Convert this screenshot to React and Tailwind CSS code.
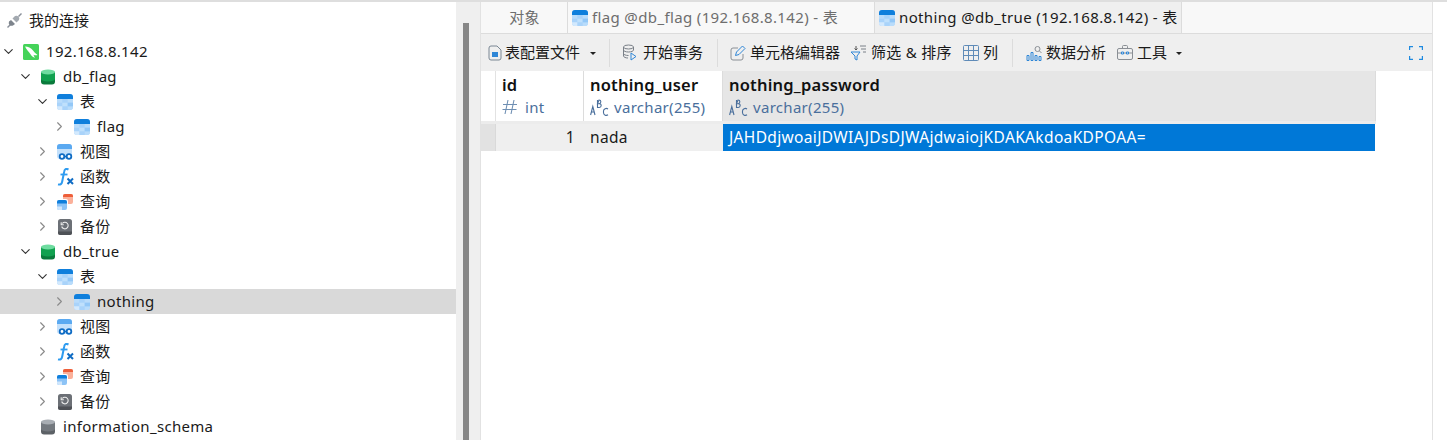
import React from "react";
import { ChevronDown, ChevronRight } from "lucide-react";

const cjk = "font-['Noto_Sans','Noto_Sans_CJK_SC',sans-serif]";

function TableIcon() {
  return (
    <svg width="16" height="16" viewBox="0 0 16 16" className="shrink-0">
      <rect x="0" y="0" width="16" height="16" rx="3" fill="#a9d3fa" />
      <path d="M0 5V3a3 3 0 0 1 3-3h10a3 3 0 0 1 3 3v2z" fill="#0f7fdc" />
      <path d="M0 5h5.300v3.700H0zM10.700 5H16v3.700h-5.300z" fill="#b9dcfb" />
      <path d="M5.300 8.700h5.400v3.600H5.300z" fill="#bfe0fc" />
      <path d="M0 12.300h5.300V16H3a3 3 0 0 1-3-3z" fill="#d3e9fd" />
      <path d="M10.700 12.300H16V13a3 3 0 0 1-3 3h-2.300z" fill="#b9dcfb" />
      <path d="M10.700 8.700H16v3.600h-5.300z" fill="#94c8f7" />
    </svg>
  );
}

function DbIcon({ top, mid, low }) {
  return (
    <svg width="14" height="16" viewBox="0 0 14 16" className="shrink-0 ml-[1px]">
      <rect x="0" y="2" width="14" height="13.500" rx="3" fill={low} />
      <path d="M0 3h14v7a7 2.400 0 0 1-14 0z" fill={mid} />
      <ellipse cx="7" cy="3" rx="7" ry="2.600" fill={top} />
    </svg>
  );
}

function ViewIcon() {
  return (
    <svg width="16" height="16" viewBox="0 0 16 16" className="shrink-0">
      <rect width="15" height="15" rx="3" fill="#c3e0fb" />
      <path d="M0 5V3a3 3 0 0 1 3-3h9a3 3 0 0 1 3 3v2z" fill="#5aa9f1" />
      <circle cx="5" cy="12.500" r="2.300" fill="#fff" stroke="#0f6cc4" strokeWidth="1.800" />
      <circle cx="12" cy="12.500" r="2.300" fill="#fff" stroke="#0f6cc4" strokeWidth="1.800" />
      <path d="M7 12.500h3" stroke="#0f6cc4" strokeWidth="1.600" />
    </svg>
  );
}

function FuncIcon() {
  return (
    <svg width="17" height="18" viewBox="0 0 17 18" className="shrink-0">
      <path d="M11.500 1.500C9 .2 7.600 1.200 7.200 3.500L5.200 13.500c-.4 2.500-1.800 3.500-4.200 2.900" fill="none" stroke="#2d9bf0" strokeWidth="2" />
      <path d="M3.500 6.500h7" stroke="#2d9bf0" strokeWidth="1.800" />
      <path d="M10.500 10.500l5.500 5.500M16 10.500l-5.500 5.500" stroke="#0f6cc4" strokeWidth="2" />
    </svg>
  );
}

function QueryIcon() {
  return (
    <svg width="17" height="16" viewBox="0 0 17 16" className="shrink-0">
      <rect x="6" y="0" width="10" height="10" rx="2" fill="#fbb09a" />
      <path d="M6 3V2a2 2 0 0 1 2-2h6a2 2 0 0 1 2 2v1z" fill="#ee5f3a" />
      <rect x="-1" y="5" width="12" height="12" rx="2" fill="#fff" />
      <rect x="0" y="6" width="10" height="10" rx="2" fill="#8cc3f6" />
      <path d="M0 9.500V8a2 2 0 0 1 2-2h6a2 2 0 0 1 2 2v1.500z" fill="#0f7fdc" />
      <path d="M0 12.500h5V16H2a2 2 0 0 1-2-2z" fill="#cfe6fc" />
    </svg>
  );
}

function BackupIcon() {
  return (
    <svg width="14" height="16" viewBox="0 0 14 16" className="shrink-0 ml-[1px]">
      <rect width="14" height="16" rx="2.500" fill="#6c7076" />
      <path d="M0 12.500h14v1a2.500 2.500 0 0 1-2.500 2.500h-9A2.500 2.500 0 0 1 0 13.500z" fill="#4e5156" />
      <path d="M4.300 4.500a3.300 3.300 0 1 1-.6 3" fill="none" stroke="#eeeeee" strokeWidth="1.100" />
      <path d="M3.200 3.200v2.600h2.600" fill="none" stroke="#eeeeee" strokeWidth="1.100" />
    </svg>
  );
}

function ConnIcon() {
  return (
    <svg width="16" height="16" viewBox="0 0 16 16" className="shrink-0">
      <rect width="16" height="16" rx="1.500" fill="#45d359" />
      <path d="M2 2.500c3 0 6 1.500 8 4 1 1.300 2.500 3 4.500 4.500-1.500.5-3 .2-4-.3.200 1 .7 2 1.500 3-2-.5-3.500-1.700-4.500-3.500C6 8 3.500 5.500 2 2.500z" fill="#fff" />
    </svg>
  );
}

function Row({ indent, open, leaf, dim, icon, label, selected }) {
  return (
    <div className={`h-[25px] flex items-center shrink-0 ${selected ? "bg-[#d9d9d9]" : ""}`}>
      <div className={indent}>
        {leaf ? (
          <div className="w-[15px]" />
        ) : open ? (
          <ChevronDown size={15} strokeWidth={1.800} className="text-[#333]" />
        ) : (
          <ChevronRight size={15} strokeWidth={1.800} className={dim ? "text-[#8a8a8a]" : "text-[#333]"} />
        )}
      </div>
      <div className="ml-[7px] w-[24px] flex items-center">{icon}</div>
      <span className="text-[#1a1a1a] ml-[-1px]">{label}</span>
    </div>
  );
}

function DbGroup({ name, table, selected }) {
  return (
    <>
      <Row indent="pl-[18px]" open icon={<DbIcon top="#6fdca0" mid="#12a150" low="#0b7a3c" />} label={name} />
      <Row indent="pl-[35px]" open icon={<TableIcon />} label="表" />
      <Row indent="pl-[52px]" dim icon={<TableIcon />} label={table} selected={selected} />
      <Row indent="pl-[35px]" dim icon={<ViewIcon />} label="视图" />
      <Row indent="pl-[35px]" dim icon={<FuncIcon />} label="函数" />
      <Row indent="pl-[35px]" dim icon={<QueryIcon />} label="查询" />
      <Row indent="pl-[35px]" dim icon={<BackupIcon />} label="备份" />
    </>
  );
}

function Tab({ label, width, active, icon }) {
  return (
    <div
      className={`h-full flex items-center shrink-0 border-r border-[#dcdcdc] tracking-[0.360px] ${width} ${
        active ? "bg-[#efefef] text-[#1a1a1a]" : "bg-[#f8f8f8] text-[#6e6e6e]"
      }`}
    >
      {icon}
      {label}
    </div>
  );
}

function ToolDivider() {
  return <div className="w-px h-[28px] bg-[#dcdcdc] shrink-0" />;
}

function Caret() {
  return <div className="w-0 h-0 border-x-[3px] border-x-transparent border-t-[3px] border-t-[#222] mt-[1px]" />;
}

function AbcIcon() {
  return (
    <svg width="19" height="17" viewBox="0 0 19 17" className="shrink-0" fill="none" stroke="#4a6f9c" strokeWidth="1.100">
      <path d="M.6 16l2.200-8.500L5 16M1.300 13h3" />
      <path d="M7.500 1v7.500h1.800a1.900 1.900 0 0 0 0-3.800H7.500m0 0h1.500a1.800 1.800 0 0 0 0-3.700z" />
      <path d="M18 10a2.800 2.800 0 0 0-4.500 2v1.800a2.800 2.800 0 0 0 4.500 2" />
    </svg>
  );
}

function HashIcon() {
  return (
    <svg width="16" height="16" viewBox="0 0 16 16" className="shrink-0" fill="none" stroke="#6f8fb3" strokeWidth="1.100">
      <path d="M6 1L3 15M12 1L9 15M1 5.500h14M.5 10.500h14" />
    </svg>
  );
}

function ColumnHead({ name, type, icon, width, gap, bg }) {
  return (
    <div className={`${width} ${bg} border-r border-[#dcdcdc] pl-[6px] pt-[4px]`}>
      <div className="font-semibold text-[#111] text-[16.500px] tracking-[0.200px] leading-[20px]">{name}</div>
      <div className={`flex items-center ${gap} mt-[4px] text-[#4a6f9c] text-[15px] tracking-[0.300px]`}>
        {icon}
        {type}
      </div>
    </div>
  );
}

export default function App() {
  return (
    <div className={`w-[1447px] h-[440px] overflow-hidden bg-white flex flex-col text-[15px] tracking-[0.300px] leading-none ${cjk}`}>
      <div className="h-[2px] bg-[#dedede] shrink-0" />
      <div className="flex-1 flex min-h-0">
        {/* connection tree */}
        <aside className="w-[456px] shrink-0 flex flex-col">
          <div className="h-[37px] shrink-0 flex items-center pl-[6px]">
            <svg width="17" height="17" viewBox="0 0 17 17">
              <path d="M1.500 15.500l3-3" stroke="#8a9099" strokeWidth="1.500" />
              <path d="M5 8l4 4-2 1.500a3 3 0 0 1-4-4z" fill="#7d848c" />
              <path d="M6.500 6.500l4 4 2.500-2.500a3 3 0 0 0-4-4z" fill="#a3a9b0" />
              <path d="M12.500 4.500l3-3" stroke="#8a9099" strokeWidth="1.500" />
            </svg>
            <span className="ml-[6px] text-[#1a1a1a] tracking-normal">我的连接</span>
          </div>
          <div className="flex flex-col">
            <Row indent="pl-[1px]" open icon={<ConnIcon />} label="192.168.8.142" />
            <DbGroup name="db_flag" table="flag" />
            <DbGroup name="db_true" table="nothing" selected />
            <Row indent="pl-[18px]" leaf icon={<DbIcon top="#a8adb3" mid="#74797f" low="#5c6166" />} label="information_schema" />
          </div>
        </aside>

        {/* splitter */}
        <div className="w-[25px] shrink-0 bg-[#efefef] border-r border-[#e2e2e2] pl-[7px] pt-[21px]">
          <div className="w-[6px] h-full bg-[#878787]" />
        </div>

        {/* table pane */}
        <main className="w-[952px] shrink-0 flex flex-col border-r border-[#e2e2e2]">
          <div className="h-[32px] shrink-0 flex bg-[#f8f8f8] border-b border-[#dcdcdc]">
            <Tab label="对象" width="w-[87px] justify-center pl-[1px]" />
            <Tab
              width="w-[307px] pl-[4px]"
              icon={<span className="mr-[4px]"><TableIcon /></span>}
              label="flag @db_flag (192.168.8.142) - 表"
            />
            <Tab
              active
              width="w-[307px] pl-[4px]"
              icon={<span className="mr-[4px]"><TableIcon /></span>}
              label="nothing @db_true (192.168.8.142) - 表"
            />
          </div>
          <div className="h-[37px] shrink-0 bg-[#efefef] flex items-center text-[#1a1a1a] tracking-normal">
            <div className="flex items-center gap-[3px] ml-[7px] w-[121px]">
              <svg width="14" height="16" viewBox="0 0 14 16" fill="none">
                <path d="M1 3a2 2 0 0 1 2-2h6l4 4v8a2 2 0 0 1-2 2H3a2 2 0 0 1-2-2z" stroke="#7a8794" />
                <path d="M4 7h6v5H4z" fill="#2f86d6" />
              </svg>
              <span>表配置文件</span>
              <span className="ml-[7px]"><Caret /></span>
            </div>
            <ToolDivider />
            <div className="flex items-center gap-[5px] ml-[12px] w-[95px]">
              <svg width="16" height="17" viewBox="0 0 16 17" fill="none" stroke="#7a8088">
                <ellipse cx="6.500" cy="3" rx="5" ry="2" />
                <path d="M1.500 3v9c0 1 2 2 4.500 2M11.500 3v3M1.500 6c0 1 2 2 5 2s5-1 5-2M1.500 9.500c0 1 2 2 5 2" />
                <path d="M9 9l5 3.500L9 16z" stroke="#2f86d6" />
              </svg>
              <span>开始事务</span>
            </div>
            <ToolDivider />
            <div className="flex items-center gap-[4px] ml-[12px] w-[120px]">
              <svg width="16" height="16" viewBox="0 0 16 16" fill="none">
                <path d="M8 3H3a2 2 0 0 0-2 2v8a2 2 0 0 0 2 2h8a2 2 0 0 0 2-2V9" stroke="#8a8f95" />
                <path d="M5.500 10.500l1-3.500 6-6 2.500 2.500-6 6z" stroke="#2f86d6" />
              </svg>
              <span>单元格编辑器</span>
            </div>
            <div className="flex items-center gap-[4px] w-[113px] tracking-[0.300px]">
              <svg width="17" height="16" viewBox="0 0 17 16" fill="none">
                <path d="M1 7h9L7 11v4l-2-1v-3z" stroke="#2f86d6" />
                <path d="M6 1v4M4.500 3.500L6 5l1.500-1.500" stroke="#555" />
                <path d="M10 1h6M11 4h5M13 7h3" stroke="#7a8088" />
              </svg>
              <span>筛选 &amp; 排序</span>
            </div>
            <div className="flex items-center gap-[4px] w-[49px]">
              <svg width="16" height="16" viewBox="0 0 16 16" fill="none" stroke="#5f8bb8">
                <rect x="0.500" y="0.500" width="15" height="15" rx="1" />
                <path d="M5.500 .5v15M10.500 .5v15M.5 5.500h15M.5 10.500h15" />
              </svg>
              <span>列</span>
            </div>
            <ToolDivider />
            <div className="flex items-center gap-[4px] ml-[13px] w-[91px]">
              <svg width="16" height="16" viewBox="0 0 16 16" fill="none" stroke="#2f86d6">
                <path d="M1 10.500h2v5H1zM5 7.500h2v8H5zM9 10.500h2v5H9zM13 11.500h2v4h-2z" />
                <circle cx="11.500" cy="4" r="2.500" stroke="#8a8f95" />
                <path d="M13.500 6l2 2" stroke="#8a8f95" />
              </svg>
              <span>数据分析</span>
            </div>
            <div className="flex items-center gap-[4px]">
              <svg width="16" height="15" viewBox="0 0 16 15" fill="none" stroke="#8a8f95">
                <rect x="0.500" y="3.500" width="15" height="11" rx="1.500" />
                <path d="M5.500 3.500v-2a1 1 0 0 1 1-1h3a1 1 0 0 1 1 1v2M.5 8h4M11.500 8h4M6.500 8h3" />
                <path d="M4.500 7h2v2h-2zM9.500 7h2v2h-2z" stroke="#2f86d6" />
              </svg>
              <span>工具</span>
              <span className="ml-[5px]"><Caret /></span>
            </div>
            <svg width="14" height="14" viewBox="0 0 14 14" fill="none" stroke="#1f8ae0" strokeWidth="1.200" className="ml-auto mr-[9px]">
              <path d="M.6 4V.6H4M10 .6h3.400V4M13.400 10v3.400H10M4 13.400H.6V10" />
            </svg>
          </div>

          {/* grid */}
          <div className="flex flex-col w-[895px]">
            <div className="h-[53px] flex shrink-0 border-b-[3px] border-[#ececec]">
              <div className="w-[15px] bg-white border-r border-[#e2e2e2]" />
              <ColumnHead name="id" type="int" icon={<HashIcon />} width="w-[88px]" gap="gap-[7px]" bg="bg-white" />
              <ColumnHead name="nothing_user" type="varchar(255)" icon={<AbcIcon />} width="w-[139px]" gap="gap-[5px]" bg="bg-white" />
              <ColumnHead name="nothing_password" type="varchar(255)" icon={<AbcIcon />} width="w-[653px]" gap="gap-[5px]" bg="bg-[#e6e6e6]" />
            </div>
            <div className="h-[27px] flex shrink-0 items-stretch text-[15.500px] tracking-[0.350px]">
              <div className="w-[15px] bg-[#e2e2e2] border-r border-[#d9d9d9]" />
              <div className="w-[88px] bg-[#efefef] flex items-center justify-end pr-[9px] text-[#1a1a1a]">1</div>
              <div className="w-[139px] bg-[#efefef] flex items-center pl-[6px] text-[#1a1a1a]">nada</div>
              <div className="w-[653px] bg-[#0078d7] border-r border-white flex items-center pl-[6px] text-white">
                JAHDdjwoaiJDWIAJDsDJWAjdwaiojKDAKAkdoaKDPOAA=
              </div>
            </div>
          </div>
        </main>
      </div>
    </div>
  );
}
